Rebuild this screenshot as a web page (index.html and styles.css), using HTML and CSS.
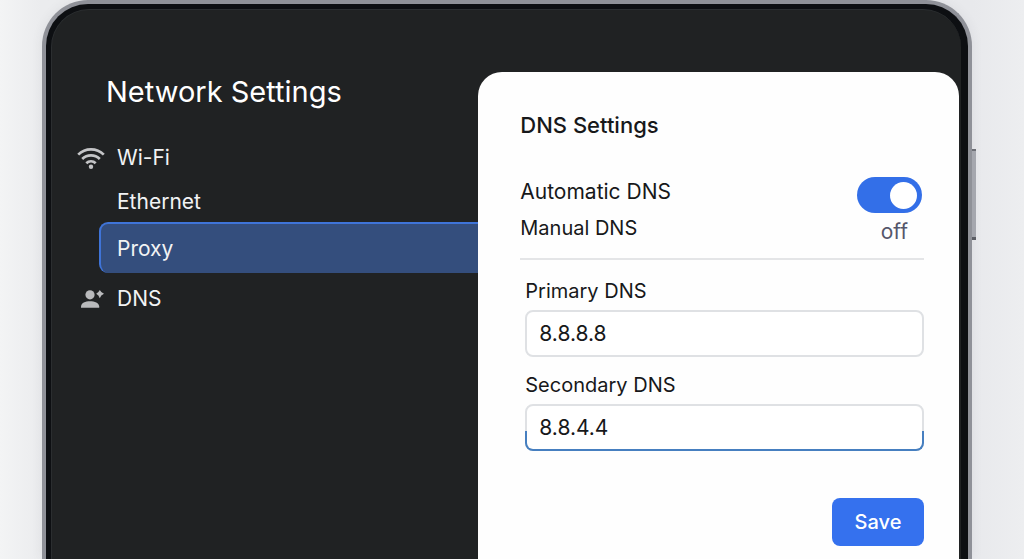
FILE: index.html
```html
<!DOCTYPE html>
<html lang="en">
<head>
<meta charset="utf-8">
<title>Network Settings</title>
<meta name="viewport" content="width=device-width">
<link rel="stylesheet" href="styles.css">
</head>
<body>
<div class="device">
  <div class="screen">
    <div class="sidebar">
      <h1>Network Settings</h1>
      <nav>
        <a class="item" href="#wifi">
          <svg class="icon" viewBox="0 0 28 24" width="28" height="24" fill="none" stroke="#c4c5c7" stroke-width="2.7">
            <path d="M1.200 8.600a18.200 18.200 0 0 1 25.600 0M5.200 13a12.600 12.600 0 0 1 17.600 0M9.300 17.200a6.700 6.700 0 0 1 9.400 0"/>
            <circle cx="14" cy="20.800" r="2.200" fill="#c4c5c7" stroke="none"/>
          </svg>
          Wi-Fi
        </a>
        <a class="item" href="#ethernet">Ethernet</a>
        <a class="item current" href="#proxy">Proxy</a>
        <a class="item" href="#dns">
          <svg class="icon" viewBox="0 0 28 24" width="28" height="24" fill="#b9babc">
            <circle cx="13" cy="7.800" r="4.600"/>
            <path d="M4 20.800v-1.200c0-3.600 4.400-5.400 9-5.400s9.200 1.800 9.200 5.400v1.200z"/>
            <path d="M22.800 3l1.500 2 2.700 1.700-2.700 1.900-1.500 2.600-1.400-2.600-2.200-1.900 2.200-1.700z"/>
          </svg>
          DNS
        </a>
      </nav>
    </div>
    <form class="panel">
      <h2>DNS Settings</h2>
      <div class="row">
        <label for="auto">Automatic DNS</label>
        <input class="switch" type="checkbox" role="switch" id="auto" checked>
      </div>
      <div class="row row-last">
        <span class="manual">Manual DNS</span>
        <span class="state">off</span>
      </div>
      <div class="field">
        <label for="primary">Primary DNS</label>
        <div class="box"><input type="text" id="primary" value="8.8.8.8"></div>
      </div>
      <div class="field">
        <label for="secondary">Secondary DNS</label>
        <div class="box active"><input type="text" id="secondary" value="8.8.4.4"></div>
      </div>
      <button class="save" type="button">Save</button>
    </form>
  </div>
</div>
</body>
</html>
```

FILE: styles.css
```css
* {
  box-sizing: border-box;
}
body {
  margin: 0;
  height: 100vh;
  overflow: hidden;
  background: linear-gradient(90deg, #f3f4f5, #ebecee 4%, #e8e9ec 95%, #edeef0);
  font-family: Inter, "Liberation Sans", sans-serif;
  font-size: 21px;
  line-height: 30px;
  color: #17181a;
}
h1, h2 {
  margin: 0;
}
h1 {
  padding-left: 54px;
  font-size: 29px;
  font-weight: 400;
  line-height: 36px;
  color: #fff;
}
h2 {
  margin-bottom: 36px;
  font-size: 22px;
  font-weight: 500;
  line-height: 32px;
}

.device {
  position: relative;
  display: flex;
  min-height: 100%;
  margin: 0 52px 0 42px;
  padding: 5px 7px 0 5px;
  border: 4px solid #8f9198;
  border-bottom: 0;
  border-radius: 46px 46px 0 0;
  background: #0d0f12;
  box-shadow: 0 0 12px rgba(60, 64, 80, .08);
}
/* side key */
.device::after {
  content: "";
  position: absolute;
  top: 145px;
  right: -8px;
  width: 4px;
  height: 91px;
  border-top: 2px solid #6d6f76;
  border-bottom: 3px solid #5b5d64;
  background: #a5a7ae;
  box-sizing: border-box;
}
.screen {
  flex: 1;
  display: grid;
  grid-template-columns: 47fr 53fr;
  padding-right: 2px;
  border: 1px solid #2b2e30;
  border-width: 1px 0 0 1px;
  border-radius: 38px 38px 0 0;
  background: #202223;
}

.sidebar {
  padding-top: 64px;
}
nav {
  display: flex;
  flex-direction: column;
  padding-top: 26px;
}
.item {
  display: flex;
  align-items: center;
  gap: 12px;
  height: 44px;
  margin-left: 47px;
  padding-left: 18px;
  color: #f2f3f4;
  text-decoration: none;
}
.item .icon {
  margin-left: -40px;
}
.current {
  height: 51px;
  margin-top: -2px;
  border: 2px solid #3f74d8;
  border-width: 2px 0 0 2px;
  border-radius: 9px 0 0 9px;
  padding-left: 16px;
  background: #344e7d;
}
.current + .item {
  margin-top: 4px;
}

.panel {
  display: flex;
  flex-direction: column;
  margin-top: 62px;
  padding: 37px 35px 12px 42px;
  border-radius: 24px 24px 0 0;
  background: #fefefe;
}
.row {
  display: flex;
  justify-content: space-between;
  align-items: flex-start;
  padding-right: 2px;
}
.row-last {
  margin-bottom: 16px;
  padding-bottom: 15px;
  border-bottom: 2px solid #e4e5e7;
}
.manual,
.field label {
  font-size: 20px;
}
.state {
  align-self: flex-end;
  margin-bottom: -4px;
  padding: 0 14px;
  color: #55566b;
}
.switch {
  appearance: none;
  display: flex;
  align-items: center;
  width: 65px;
  height: 36px;
  margin: 0;
  padding: 0 5px;
  border-radius: 18px;
  background: #9a9ca3;
}
.switch::before {
  content: "";
  width: 27px;
  height: 27px;
  border-radius: 50%;
  background: #fff;
}
.switch:checked {
  justify-content: flex-end;
  background: #336fe8;
}

.field {
  margin: 0 0 13px 5px;
}
.field label {
  display: block;
  margin-bottom: 4px;
}
.box {
  position: relative;
}
.box input {
  display: block;
  width: 100%;
  height: 47px;
  padding: 0 12px;
  border: 2px solid #dfe1e4;
  border-radius: 8px;
  background: #fff;
  color: inherit;
  font: inherit;
}
/* highlight on the lower half of the box */
.active::after {
  content: "";
  position: absolute;
  right: 0;
  bottom: 0;
  left: 0;
  height: 20px;
  border: 2px solid #467fc0;
  border-top: 0;
  border-radius: 0 0 8px 8px;
  box-sizing: border-box;
  pointer-events: none;
}
.save {
  align-self: flex-end;
  width: 92px;
  height: 48px;
  margin-top: 34px;
  border: 0;
  border-radius: 8px;
  background: #3571ee;
  color: #fff;
  font: 500 20px Inter, "Liberation Sans", sans-serif;
}
```
